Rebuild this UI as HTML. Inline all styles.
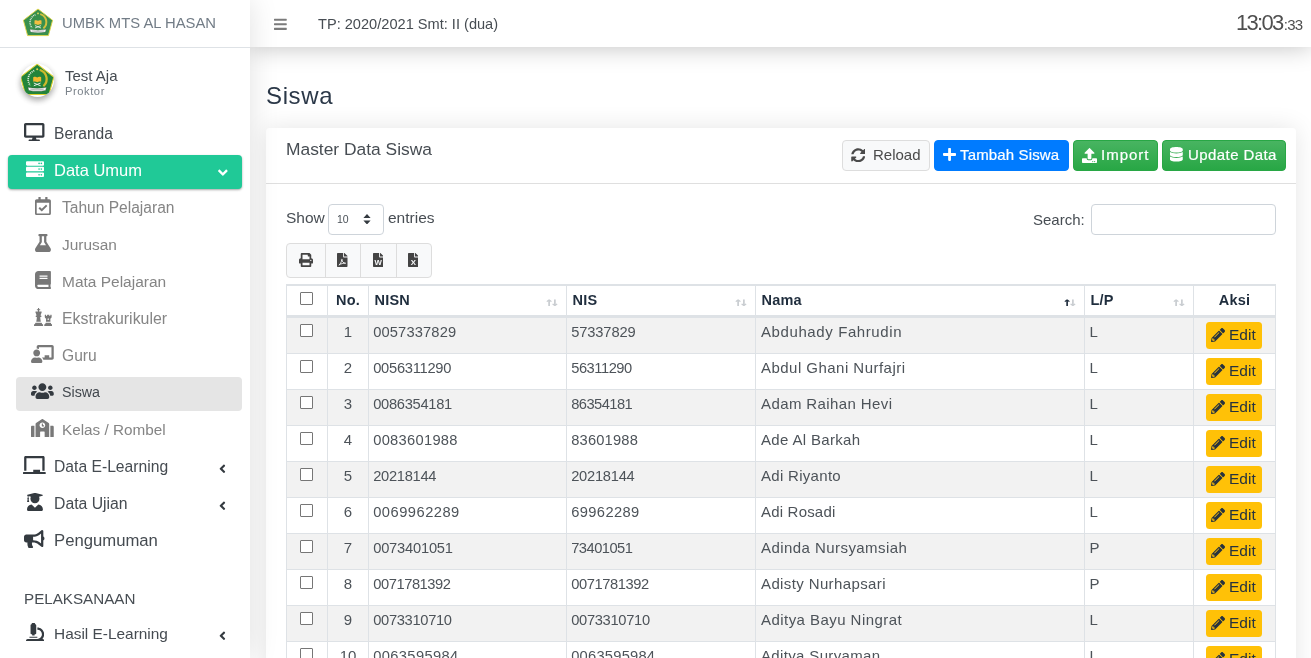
<!DOCTYPE html>
<html lang="id">
<head>
<meta charset="utf-8">
<title>Siswa | UMBK MTS AL HASAN</title>
<style>
*{box-sizing:border-box}
html,body{margin:0;padding:0}
body{width:1311px;height:658px;overflow:hidden;background:#fff;font-family:"Liberation Sans",sans-serif;font-size:16px;color:#212529;position:relative}
svg{display:block}
a{text-decoration:none;color:inherit}
.tx,.txt,.nm,.rl,.nh,.tp,.clk,h1,.ttl,.btn span,.lbl,.sel span,table,.ed span{will-change:transform}
.sidebar{position:absolute;left:0;top:0;width:250px;height:658px;background:#fff;box-shadow:0 0 28px rgba(0,0,0,.12);z-index:5}
.brand{position:absolute;left:0;top:0;width:250px;height:48px;border-bottom:1px solid #dee2e6}
.brand .logo{position:absolute;left:21.5px;top:8px;opacity:.9}
.brand .txt{position:absolute;left:62px;top:11px;font-size:14.8px;line-height:24px;color:#727c86;white-space:nowrap}
.user .av{position:absolute;left:21px;top:64px;width:33px;height:33px;border-radius:50%;background:#fff;box-shadow:0 3px 6px rgba(0,0,0,.16),0 3px 6px rgba(0,0,0,.23);overflow:hidden}
.user .av svg{position:absolute;left:-1.7px;top:-1.2px}
.user .nm{position:absolute;left:65px;top:65px;font-size:15px;line-height:22px;color:#454b51;white-space:nowrap}
.user .rl{position:absolute;left:65px;top:84px;font-size:11.2px;letter-spacing:.55px;line-height:14px;color:#7a828a;white-space:nowrap}
.nav{position:absolute;left:0;top:0;width:250px;margin:0;padding:0;list-style:none}
.ni{position:absolute;left:8px;width:234px;height:34px;border-radius:4px;color:#454b51;font-size:15.6px;line-height:33px;white-space:nowrap}
.ni.sub{left:16px;width:226px;color:#858585}
.ni .ic{position:absolute;left:0;top:0;width:100%;height:100%;color:#343a40}
.ni.sub .ic{color:#787878}
.ni.cur .ic{color:#343a40}
.ni.open .ic{color:#fff}
.ni .ic svg{position:absolute}
.ni .tx{position:absolute;left:46.2px;top:-.700px}
.ni.sub .tx{left:45.8px}
.ni.open{background:#20c997;color:#fff;box-shadow:0 1px 3px rgba(0,0,0,.12),0 1px 2px rgba(0,0,0,.24)}
.ni.cur{background:#e5e5e5;color:#41474d}
.nh{position:absolute;left:24px;top:588px;font-size:15.2px;line-height:22px;color:#474d53;white-space:nowrap}
.topbar{position:absolute;left:250px;top:0;width:1061px;height:47px;background:#fff;box-shadow:0 0 25px rgba(0,0,0,.25);z-index:3}
.topbar .bars{position:absolute;left:24px;top:16.5px;color:#7b7b7b}
.topbar .tp{position:absolute;left:68px;top:12px;font-size:14.6px;line-height:24px;color:#474d53;white-space:nowrap}
.topbar .clk{position:absolute;right:8.5px;top:6.5px;white-space:nowrap;color:#4f4f4f;line-height:32px}
.topbar .clk b{font-weight:400;font-size:22px;letter-spacing:-1.7px;margin-right:1.2px}
.topbar .clk i{font-style:normal;font-size:15px;letter-spacing:-.750px}
h1{position:absolute;left:266px;top:80.5px;margin:0;font-size:24px;letter-spacing:.62px;line-height:30px;font-weight:400;color:#2b3848;white-space:nowrap}
.card{position:absolute;left:266px;top:128px;width:1030px;height:560px;background:#fff;border-radius:4px;box-shadow:0 0 24px rgba(0,0,0,.105)}
.card .hd{position:absolute;left:0;top:0;width:1030px;height:56px;border-bottom:1px solid #dfdfdf}
.card .ttl{position:absolute;left:20px;top:8.4px;font-size:17.4px;line-height:26px;color:#474d53;white-space:nowrap}
.btn{position:absolute;top:12px;height:31px;border-radius:4px;font-size:15px;line-height:29px;white-space:nowrap;border:1px solid transparent}
.btn svg{position:absolute}
.btn span{position:absolute;top:-1px}
.b-pri span,.b-suc span{-webkit-text-stroke:.2px #fff}
.b-def{left:576px;width:88px;background:#f8f9fa;border-color:#ddd;color:#4a4a4a}
.b-pri{left:668px;width:135px;background:#007bff;border-color:#007bff;color:#fff}
.b-suc{background:#28a745 linear-gradient(180deg,#48b461,#28a745);border-color:#28a745;color:#fff}
.b-imp{left:807px;width:85px}
.b-upd{left:896px;width:124px}
.lbl{position:absolute;font-size:15.5px;line-height:22px;color:#474d53;white-space:nowrap}
.sel{position:absolute;left:62px;top:76px;width:56px;height:31px;border:1px solid #ced4da;border-radius:4px;background:#fff;font-size:10.5px;line-height:29px;color:#495057}
.sel span{position:absolute;left:8px;top:0}
.sel svg{position:absolute;left:34px;top:8.7px}
.srch{position:absolute;left:825px;top:76px;width:185px;height:31px;border:1px solid #ced4da;border-radius:4px;background:#fff}
.bg{position:absolute;left:20px;top:115px;width:146px;height:34.5px;border:1px solid #ddd;border-radius:4px;background:#f8f9fa;color:#444}
.bg i{position:absolute;top:0;width:1px;height:100%;background:#ddd}
.bg svg{position:absolute;top:8.7px}
table{position:absolute;left:20px;top:156px;width:990px;border-collapse:separate;border-spacing:0;table-layout:fixed;font-size:15px;color:#4d5359}
th,td{border-right:1px solid #dee2e6;border-bottom:1px solid #dee2e6;padding:3px 5px 0 5.5px;vertical-align:top;text-align:left;white-space:nowrap;overflow:hidden;position:relative}
th:first-child,td:first-child{border-left:1px solid #dee2e6}
th{height:34px;border-top:2px solid #dee2e6;border-bottom:3px solid #dee2e6;font-size:14.5px;font-weight:700;color:#1f2d3d;line-height:22px;padding-top:2.5px;letter-spacing:.2px}
td{height:36px;line-height:22px}
td.d{font-size:14.7px;padding-left:4.2px}
td.n{letter-spacing:.42px;padding-left:5px}
td.l{padding-left:4.5px}
tr.o td{background:#f2f2f2}
.c{text-align:center;padding-left:0;padding-right:0}
.cb{display:block;width:13px;height:13px;border:1px solid #767676;border-radius:1px;background:#fff;margin:3px 0 0 13px}
th .cb{margin-top:3.5px}
.so{position:absolute;right:10px;top:6.5px;font-size:12px;line-height:18px;font-weight:700;color:#c9cdd1;letter-spacing:-2.7px;transform:scaleX(1.28);transform-origin:100% 50%;font-family:"DejaVu Sans Mono","DejaVu Sans","Liberation Sans",sans-serif}
.so b{font-weight:700;color:#1f2d3d}
.ed{display:block;position:relative;margin:1px 0 0 12px;width:56px;height:27px;border-radius:3.5px;background:#ffc107;color:#27333f;font-size:15.5px;line-height:27px;text-align:left}
.ed svg{position:absolute;left:5px;top:6px}
.ed span{position:absolute;left:22.8px;top:-1px}
</style>
</head>
<body>
<div class="topbar">
  <div class="bars"><svg width="12.78" height="14.6" viewBox="0 0 448 512" ><path fill="currentColor" d="M16 132h416c8.837 0 16-7.163 16-16V76c0-8.837-7.163-16-16-16H16C7.163 60 0 67.163 0 76v40c0 8.837 7.163 16 16 16zm0 160h416c8.837 0 16-7.163 16-16v-40c0-8.837-7.163-16-16-16H16c-8.837 0-16 7.163-16 16v40c0 8.837 7.163 16 16 16zm0 160h416c8.837 0 16-7.163 16-16v-40c0-8.837-7.163-16-16-16H16c-8.837 0-16 7.163-16 16v40c0 8.837 7.163 16 16 16z"/></svg></div>
  <div class="tp">TP: 2020/2021 Smt: II (dua)</div>
  <div class="clk"><b>13:03</b><i>:33</i></div>
</div>
<aside class="sidebar">
  <div class="brand"><div class="logo"><svg width="32" height="29" viewBox="0 0 32 29" >
<polygon points="16,1 30.6,12.3 26.4,27.6 5.6,27.6 1.4,12.3" fill="#23843a" stroke="#dfd031" stroke-width=".9" stroke-linejoin="round"/>
<path d="M19 6.400a8.200 8.200 0 0 1 3 13.400" fill="none" stroke="#cdb92c" stroke-width="2" stroke-linecap="round"/>
<path d="M13.400 6.700a8.200 8.200 0 0 0-3.400 13" fill="none" stroke="#e4ecdf" stroke-width="1.500" stroke-dasharray=".9 .8"/>
<circle cx="16" cy="5.400" r=".9" fill="#e9d84a"/>
<path d="M12.500 12.500c1.200-.5 2.400-.5 3.500 .2 1.100-.7 2.300-.7 3.500-.2v4c-1.200-.4-2.400-.3-3.500 .4-1.100-.7-2.300-.8-3.500-.4z" fill="#f2b92e"/>
<path d="M13 20l6-2.400M19 20l-6-2.400" stroke="#f2f2f2" stroke-width=".8"/>
<path d="M7.800 21.300c5.400 1.100 11 1.100 16.400 0l-.8 2.800c-4.900 1-9.900 1-14.800 0z" fill="#f7f7f7" stroke="#2c3a2c" stroke-width=".3"/>
<path d="M10.200 23c3.800 .6 7.800 .6 11.600 0" fill="none" stroke="#333" stroke-width=".55" stroke-dasharray=".5 .4"/>
</svg></div><div class="txt">UMBK MTS AL HASAN</div></div>
  <div class="user"><div class="av"><svg width="36.4" height="33" viewBox="0 0 32 29" >
<polygon points="16,1 30.6,12.3 26.4,27.6 5.6,27.6 1.4,12.3" fill="#23843a" stroke="#dfd031" stroke-width=".9" stroke-linejoin="round"/>
<path d="M19 6.400a8.200 8.200 0 0 1 3 13.400" fill="none" stroke="#cdb92c" stroke-width="2" stroke-linecap="round"/>
<path d="M13.400 6.700a8.200 8.200 0 0 0-3.400 13" fill="none" stroke="#e4ecdf" stroke-width="1.500" stroke-dasharray=".9 .8"/>
<circle cx="16" cy="5.400" r=".9" fill="#e9d84a"/>
<path d="M12.500 12.500c1.200-.5 2.400-.5 3.500 .2 1.100-.7 2.300-.7 3.500-.2v4c-1.200-.4-2.400-.3-3.500 .4-1.100-.7-2.300-.8-3.500-.4z" fill="#f2b92e"/>
<path d="M13 20l6-2.400M19 20l-6-2.400" stroke="#f2f2f2" stroke-width=".8"/>
<path d="M7.800 21.300c5.400 1.100 11 1.100 16.400 0l-.8 2.800c-4.900 1-9.900 1-14.800 0z" fill="#f7f7f7" stroke="#2c3a2c" stroke-width=".3"/>
<path d="M10.200 23c3.800 .6 7.800 .6 11.600 0" fill="none" stroke="#333" stroke-width=".55" stroke-dasharray=".5 .4"/>
</svg></div><div class="nm">Test Aja</div><div class="rl">Proktor</div></div>
  <ul class="nav">
    <li class="ni " style="top:118px"><span class="ic"><svg width="20.47" height="18.2" viewBox="0 0 576 512" style="left:16.4px;top:5.3px"><path fill="currentColor" d="M528 0H48C21.5 0 0 21.5 0 48v320c0 26.5 21.5 48 48 48h192l-16 48h-72c-13.3 0-24 10.7-24 24s10.7 24 24 24h272c13.3 0 24-10.700 24-24s-10.700-24-24-24h-72l-16-48h192c26.500 0 48-21.500 48-48V48c0-26.500-21.500-48-48-48zm-16 352H64V64h448v288z"/></svg></span><span class="tx" style="font-size:15.6px">Beranda</span></li>
    <li class="ni open" style="top:155px"><span class="ic"><svg width="18.20" height="18.2" viewBox="0 0 512 512" style="left:17.5px;top:5.3px"><path fill="currentColor" d="M480 160H32c-17.673 0-32-14.327-32-32V64c0-17.673 14.327-32 32-32h448c17.673 0 32 14.327 32 32v64c0 17.673-14.327 32-32 32zm-48-88c-13.255 0-24 10.745-24 24s10.745 24 24 24 24-10.745 24-24-10.745-24-24-24zm-64 0c-13.255 0-24 10.745-24 24s10.745 24 24 24 24-10.745 24-24-10.745-24-24-24zm112 248H32c-17.673 0-32-14.327-32-32v-64c0-17.673 14.327-32 32-32h448c17.673 0 32 14.327 32 32v64c0 17.673-14.327 32-32 32zm-48-88c-13.255 0-24 10.745-24 24s10.745 24 24 24 24-10.745 24-24-10.745-24-24-24zm-64 0c-13.255 0-24 10.745-24 24s10.745 24 24 24 24-10.745 24-24-10.745-24-24-24zm112 248H32c-17.673 0-32-14.327-32-32v-64c0-17.673 14.327-32 32-32h448c17.673 0 32 14.327 32 32v64c0 17.673-14.327 32-32 32zm-48-88c-13.255 0-24 10.745-24 24s10.745 24 24 24 24-10.745 24-24-10.745-24-24-24zm-64 0c-13.255 0-24 10.745-24 24s10.745 24 24 24 24-10.745 24-24-10.745-24-24-24z"/></svg><svg width="7.70" height="15.4" viewBox="0 0 256 512" style="left:211.2px;top:10.4px;transform:rotate(-90deg)"><path fill="currentColor" d="M31.7 239l136-136c9.4-9.4 24.6-9.4 33.9 0l22.600 22.600c9.400 9.400 9.400 24.600 0 33.900L127.900 256l96.400 96.400c9.400 9.400 9.400 24.600 0 33.900L201.700 409c-9.400 9.400-24.600 9.400-33.900 0l-136-136c-9.500-9.400-9.500-24.600-.1-34z"/></svg></span><span class="tx" style="font-size:16.5px">Data Umum</span></li>
    <li class="ni sub" style="top:192px"><span class="ic"><svg width="15.92" height="18.2" viewBox="0 0 448 512" style="left:18.7px;top:5.3px"><path fill="currentColor" d="M400 64h-48V12c0-6.627-5.373-12-12-12h-40c-6.627 0-12 5.373-12 12v52H160V12c0-6.627-5.373-12-12-12h-40c-6.627 0-12 5.373-12 12v52H48C21.490 64 0 85.490 0 112v352c0 26.510 21.490 48 48 48h352c26.510 0 48-21.490 48-48V112c0-26.510-21.490-48-48-48zm-6 400H54a6 6 0 0 1-6-6V160h352v298a6 6 0 0 1-6 6zm-52.849-200.650L198.842 404.519c-4.705 4.667-12.303 4.637-16.971-.068l-75.091-75.699c-4.667-4.705-4.637-12.303.068-16.971l22.719-22.536c4.705-4.667 12.303-4.637 16.970.069l44.104 44.461 111.072-110.181c4.705-4.667 12.303-4.637 16.971.068l22.536 22.718c4.667 4.705 4.636 12.303-.069 16.970z"/></svg></span><span class="tx" style="font-size:15.57px">Tahun Pelajaran</span></li>
    <li class="ni sub" style="top:229px"><span class="ic"><svg width="15.92" height="18.2" viewBox="0 0 448 512" style="left:18.7px;top:5.3px"><path fill="currentColor" d="M437.2 403.5L320 215V64h8c13.3 0 24-10.7 24-24V24c0-13.3-10.7-24-24-24H120c-13.3 0-24 10.7-24 24v16c0 13.3 10.7 24 24 24h8v151L10.8 403.5C-18.5 450.6 15.3 512 70.9 512h306.2c55.7 0 89.4-61.5 60.1-108.500zM137.900 320l48.200-77.600c3.700-5.200 5.800-11.600 5.800-18.400V64h64v160c0 6.900 2.200 13.200 5.800 18.400l48.200 77.600h-172z"/></svg></span><span class="tx" style="font-size:15.44px">Jurusan</span></li>
    <li class="ni sub" style="top:266px"><span class="ic"><svg width="15.92" height="18.2" viewBox="0 0 448 512" style="left:18.7px;top:5.3px"><path fill="currentColor" d="M448 360V24c0-13.3-10.7-24-24-24H96C43 0 0 43 0 96v320c0 53 43 96 96 96h328c13.3 0 24-10.7 24-24v-16c0-7.5-3.500-14.300-8.900-18.700-4.200-15.400-4.200-59.300 0-74.700 5.400-4.300 8.900-11.100 8.900-18.600zM128 134c0-3.300 2.700-6 6-6h212c3.300 0 6 2.700 6 6v20c0 3.300-2.700 6-6 6H134c-3.300 0-6-2.700-6-6v-20zm0 64c0-3.300 2.700-6 6-6h212c3.300 0 6 2.700 6 6v20c0 3.300-2.700 6-6 6H134c-3.300 0-6-2.700-6-6v-20zm253.400 250H96c-17.700 0-32-14.300-32-32 0-17.600 14.400-32 32-32h285.400c-1.900 17.100-1.900 46.900 0 64z"/></svg></span><span class="tx" style="font-size:15.49px">Mata Pelajaran</span></li>
    <li class="ni sub" style="top:303px"><span class="ic"><svg width="18.20" height="18.2" viewBox="0 0 512 512" style="left:17.6px;top:5.3px"><path fill="currentColor" d="M74 208H64a16 16 0 0 0-16 16v16a16 16 0 0 0 16 16h15.940A535.780 535.780 0 0 1 64 384h128a535.780 535.780 0 0 1-15.940-128H192a16 16 0 0 0 16-16v-16a16 16 0 0 0-16-16h-10l33.890-90.380a16 16 0 0 0-15-21.620H144V64h24a8 8 0 0 0 8-8V40a8 8 0 0 0-8-8h-24V8a8 8 0 0 0-8-8h-16a8 8 0 0 0-8 8v24H88a8 8 0 0 0-8 8v16a8 8 0 0 0 8 8h24v32H55.090a16 16 0 0 0-15 21.620zm173.160 251.580L224 448v-16a16 16 0 0 0-16-16H48a16 16 0 0 0-16 16v16L8.850 459.580A16 16 0 0 0 0 473.890V496a16 16 0 0 0 16 16h224a16 16 0 0 0 16-16v-22.110a16 16 0 0 0-8.840-14.310zm92.770-157.780l-3.290 82.200h126.720l-3.290-82.210 24.600-20.790A32 32 0 0 0 496 256.540V198a6 6 0 0 0-6-6h-26.380a6 6 0 0 0-6 6v26h-24.710v-26a6 6 0 0 0-6-6H373.100a6 6 0 0 0-6 6v26h-24.710v-26a6 6 0 0 0-6-6H310a6 6 0 0 0-6 6v58.600a32 32 0 0 0 11.360 24.400zM384 304a16 16 0 0 1 32 0v32h-32zm119.160 155.580L480 448v-16a16 16 0 0 0-16-16H336a16 16 0 0 0-16 16v16l-23.150 11.580a16 16 0 0 0-8.850 14.310V496a16 16 0 0 0 16 16h192a16 16 0 0 0 16-16v-22.110a16 16 0 0 0-8.840-14.310z"/></svg></span><span class="tx" style="font-size:15.9px">Ekstrakurikuler</span></li>
    <li class="ni sub" style="top:340px"><span class="ic"><svg width="22.75" height="18.2" viewBox="0 0 640 512" style="left:15.3px;top:5.3px"><path fill="currentColor" d="M208 352c-2.390 0-4.780.35-7.060 1.090C187.980 357.300 174.350 360 160 360c-14.350 0-27.980-2.700-40.950-6.910-2.280-.74-4.660-1.090-7.050-1.090C49.940 352-.33 402.480 0 464.620.14 490.880 21.730 512 48 512h224c26.270 0 47.860-21.120 48-47.380.33-62.140-49.940-112.620-112-112.620zm-48-32c53.020 0 96-42.980 96-96s-42.980-96-96-96-96 42.980-96 96 42.980 96 96 96zM592 0H208c-26.470 0-48 22.250-48 49.590V96c23.420 0 45.100 6.780 64 17.800V64h352v288h-64v-64H384v64h-76.240c19.100 16.690 33.120 38.730 39.690 64H592c26.470 0 48-22.250 48-49.590V49.590C640 22.250 618.470 0 592 0z"/></svg></span><span class="tx" style="font-size:15.6px">Guru</span></li>
    <li class="ni sub cur" style="top:377px"><span class="ic"><svg width="22.75" height="18.2" viewBox="0 0 640 512" style="left:15.3px;top:5.3px"><path fill="currentColor" d="M96 224c35.3 0 64-28.7 64-64s-28.7-64-64-64-64 28.7-64 64 28.7 64 64 64zm448 0c35.3 0 64-28.7 64-64s-28.7-64-64-64-64 28.7-64 64 28.7 64 64 64zm32 32h-64c-17.600 0-33.500 7.100-45.100 18.600 40.300 22.100 68.900 62 75.100 109.400h66c17.700 0 32-14.300 32-32v-32c0-35.300-28.700-64-64-64zm-256 0c61.900 0 112-50.100 112-112S381.900 32 320 32 208 82.100 208 144s50.100 112 112 112zm76.800 32h-8.300c-20.800 10-43.900 16-68.500 16s-47.600-6-68.500-16h-8.300C179.600 288 128 339.600 128 403.200V432c0 26.500 21.500 48 48 48h288c26.500 0 48-21.500 48-48v-28.800c0-63.600-51.600-115.200-115.200-115.200zm-223.700-13.400C161.500 263.100 145.600 256 128 256H64c-35.300 0-64 28.700-64 64v32c0 17.700 14.300 32 32 32h65.900c6.300-47.400 34.900-87.300 75.200-109.400z"/></svg></span><span class="tx" style="font-size:14.25px">Siswa</span></li>
    <li class="ni sub" style="top:414px"><span class="ic"><svg width="22.75" height="18.2" viewBox="0 0 640 512" style="left:15.3px;top:5.3px"><path fill="currentColor" d="M0 224v272c0 8.840 7.160 16 16 16h80V192H32c-17.670 0-32 14.330-32 32zm360-48h-24v-40c0-4.420-3.580-8-8-8h-16c-4.420 0-8 3.580-8 8v64c0 4.420 3.580 8 8 8h48c4.420 0 8-3.580 8-8v-16c0-4.420-3.580-8-8-8zm137.750-63.960l-160-106.670a32.020 32.020 0 0 0-35.500 0l-160 106.670A32.002 32.002 0 0 0 128 138.660V512h128V368c0-8.840 7.160-16 16-16h96c8.840 0 16 7.160 16 16v144h128V138.670c0-10.700-5.350-20.700-14.250-26.630zM320 256c-44.180 0-80-35.820-80-80s35.820-80 80-80 80 35.820 80 80-35.820 80-80 80zm288-64h-64v320h80c8.840 0 16-7.160 16-16V224c0-17.670-14.330-32-32-32z"/></svg></span><span class="tx" style="font-size:15.29px">Kelas / Rombel</span></li>
    <li class="ni " style="top:451px"><span class="ic"><svg width="22.75" height="18.2" viewBox="0 0 640 512" style="left:15.2px;top:5.3px"><path fill="currentColor" d="M96 64h448v352h64V40c0-22.060-17.940-40-40-40H72C49.940 0 32 17.940 32 40v376h64V64zm528 384H480v-64H288v64H16c-8.840 0-16 7.160-16 16v32c0 8.840 7.160 16 16 16h608c8.840 0 16-7.160 16-16v-32c0-8.840-7.160-16-16-16z"/></svg><svg width="6.80" height="13.6" viewBox="0 0 256 512" style="left:211.2px;top:11px"><path fill="currentColor" d="M31.7 239l136-136c9.4-9.4 24.6-9.4 33.9 0l22.600 22.600c9.400 9.400 9.400 24.600 0 33.900L127.900 256l96.400 96.400c9.400 9.400 9.400 24.600 0 33.900L201.700 409c-9.400 9.400-24.600 9.400-33.900 0l-136-136c-9.500-9.400-9.500-24.600-.1-34z"/></svg></span><span class="tx" style="font-size:15.68px">Data E-Learning</span></li>
    <li class="ni " style="top:488px"><span class="ic"><svg width="15.92" height="18.2" viewBox="0 0 448 512" style="left:18.6px;top:5.3px"><path fill="currentColor" d="M319.4 320.6L224 416l-95.400-95.400C57.100 323.700 0 382.200 0 454.400v9.600c0 26.500 21.500 48 48 48h352c26.500 0 48-21.500 48-48v-9.600c0-72.200-57.100-130.700-128.600-133.800zM13.600 79.800l6.400 1.500v58.400c-7 4.200-12 11.500-12 20.300 0 8.400 4.600 15.400 11.100 19.700L3.500 242c-1.700 6.900 2.100 14 7.600 14h41.800c5.500 0 9.300-7.100 7.600-14l-15.600-62.300C51.400 175.400 56 168.400 56 160c0-8.800-5-16.100-12-20.300V87.100l66 15.900c-8.600 17.200-14 36.400-14 57 0 70.700 57.300 128 128 128s128-57.300 128-128c0-20.600-5.300-39.800-14-57l96.300-23.200c18.200-4.400 18.200-27.100 0-31.500l-190.400-46c-13-3.100-26.700-3.100-39.700 0L13.600 48.200c-18.100 4.400-18.100 27.200 0 31.600z"/></svg><svg width="6.80" height="13.6" viewBox="0 0 256 512" style="left:211.2px;top:11px"><path fill="currentColor" d="M31.7 239l136-136c9.4-9.4 24.6-9.4 33.9 0l22.600 22.600c9.400 9.400 9.400 24.600 0 33.900L127.900 256l96.400 96.400c9.400 9.400 9.400 24.600 0 33.900L201.700 409c-9.400 9.400-24.600 9.400-33.900 0l-136-136c-9.500-9.400-9.500-24.600-.1-34z"/></svg></span><span class="tx" style="font-size:15.78px">Data Ujian</span></li>
    <li class="ni " style="top:525px"><span class="ic"><svg width="20.47" height="18.2" viewBox="0 0 576 512" style="left:16.4px;top:5.3px"><path fill="currentColor" d="M576 240c0-23.630-12.950-44.040-32-55.120V32.010C544 23.260 537.020 0 512 0c-7.120 0-14.190 2.380-19.980 7.020l-85.030 68.030C364.280 109.190 310.660 128 256 128H64c-35.350 0-64 28.650-64 64v96c0 35.350 28.650 64 64 64h33.700c-1.390 10.480-2.180 21.140-2.180 32 0 39.770 9.260 77.350 25.560 110.940 5.190 10.690 16.520 17.060 28.400 17.060h74.280c26.050 0 41.690-29.840 25.900-50.560-16.400-21.520-26.150-48.360-26.150-77.440 0-11.110 1.620-21.790 4.410-32H256c54.660 0 108.280 18.810 150.980 52.950l85.030 68.030a32.023 32.023 0 0 0 19.980 7.020c24.920 0 32-22.780 32-32V295.130C563.050 284.040 576 263.630 576 240zm-96 141.420l-33.050-26.440C392.950 311.780 325.120 288 256 288v-96c69.120 0 136.950-23.780 190.950-66.980L480 98.580v282.840z"/></svg></span><span class="tx" style="font-size:16.7px">Pengumuman</span></li>
    <li class="ni " style="top:618px"><span class="ic"><svg width="18.20" height="18.2" viewBox="0 0 512 512" style="left:17.5px;top:5.3px"><path fill="currentColor" d="M160 320h12v16c0 8.840 7.160 16 16 16h40c8.840 0 16-7.160 16-16v-16h12c17.670 0 32-14.330 32-32V64c0-17.670-14.330-32-32-32V16c0-8.840-7.160-16-16-16h-64c-8.840 0-16 7.160-16 16v16c-17.670 0-32 14.330-32 32v224c0 17.670 14.330 32 32 32zm304 128h-1.290C493.240 413.990 512 369.200 512 320c0-105.880-86.120-192-192-192v64c70.580 0 128 57.420 128 128s-57.420 128-128 128H48c-26.510 0-48 21.490-48 48 0 8.840 7.160 16 16 16h480c8.840 0 16-7.160 16-16 0-26.510-21.490-48-48-48zm-360-32h208c4.420 0 8-3.580 8-8v-16c0-4.420-3.580-8-8-8H104c-4.420 0-8 3.580-8 8v16c0 4.420 3.580 8 8 8z"/></svg><svg width="6.80" height="13.6" viewBox="0 0 256 512" style="left:211.2px;top:11px"><path fill="currentColor" d="M31.7 239l136-136c9.4-9.4 24.6-9.4 33.9 0l22.600 22.600c9.400 9.400 9.400 24.600 0 33.900L127.900 256l96.400 96.400c9.400 9.400 9.400 24.600 0 33.900L201.700 409c-9.400 9.400-24.600 9.400-33.900 0l-136-136c-9.500-9.400-9.500-24.600-.1-34z"/></svg></span><span class="tx" style="font-size:15.41px">Hasil E-Learning</span></li>
  </ul>
  <div class="nh">PELAKSANAAN</div>
</aside>
<h1>Siswa</h1>
<section class="card">
  <div class="hd">
    <div class="ttl">Master Data Siswa</div>
    <a class="btn b-def"><svg width="14.50" height="14.5" viewBox="0 0 512 512" style="left:7.7px;top:6.8px"><path fill="currentColor" d="M370.72 133.28C339.458 104.008 298.888 87.962 255.848 88c-77.458.068-144.328 53.178-162.791 126.850-1.344 5.363-6.122 9.150-11.651 9.150H24.103c-7.498 0-13.194-6.807-11.807-14.176C33.933 94.924 134.813 8 256 8c66.448 0 126.791 26.136 171.315 68.685L463.030 40.970C478.149 25.851 504 36.559 504 57.941V192c0 13.255-10.745 24-24 24H345.941c-21.382 0-32.090-25.851-16.971-40.971l41.750-41.749zM32 296h134.059c21.382 0 32.090 25.851 16.971 40.971l-41.750 41.750c31.262 29.273 71.835 45.319 114.876 45.280 77.418-.070 144.315-53.144 162.787-126.849 1.344-5.363 6.122-9.150 11.651-9.150h57.304c7.498 0 13.194 6.807 11.807 14.176C478.067 417.076 377.187 504 256 504c-66.448 0-126.791-26.136-171.315-68.685L48.970 471.030C33.851 486.149 8 475.441 8 454.059V320c0-13.255 10.745-24 24-24z"/></svg><span style="left:30px">Reload</span></a>
    <a class="btn b-pri"><svg width="13.12" height="15" viewBox="0 0 448 512" style="left:7.6px;top:6.3px"><path fill="currentColor" d="M416 208H272V64c0-17.67-14.33-32-32-32h-32c-17.67 0-32 14.33-32 32v144H32c-17.67 0-32 14.33-32 32v32c0 17.67 14.33 32 32 32h144v144c0 17.67 14.33 32 32 32h32c17.67 0 32-14.33 32-32V304h144c17.67 0 32-14.33 32-32v-32c0-17.67-14.33-32-32-32z"/></svg><span style="left:25.2px;letter-spacing:.15px">Tambah Siswa</span></a>
    <a class="btn b-suc b-imp"><svg width="15.00" height="15" viewBox="0 0 512 512" style="left:8px;top:7px"><path fill="currentColor" d="M296 384h-80c-13.3 0-24-10.7-24-24V192h-87.700c-17.800 0-26.700-21.500-14.100-34.100L242.300 5.700c7.500-7.500 19.800-7.500 27.300 0l152.200 152.200c12.600 12.600 3.700 34.100-14.100 34.100H320v168c0 13.300-10.700 24-24 24zm216-8v112c0 13.300-10.700 24-24 24H24c-13.300 0-24-10.700-24-24V376c0-13.300 10.700-24 24-24h136v8c0 30.900 25.100 56 56 56h80c30.900 0 56-25.100 56-56v-8h136c13.300 0 24 10.700 24 24zm-124 88c0-11-9-20-20-20s-20 9-20 20 9 20 20 20 20-9 20-20zm64 0c0-11-9-20-20-20s-20 9-20 20 9 20 20 20 20-9 20-20z"/></svg><span style="left:26.5px;letter-spacing:1px">Import</span></a>
    <a class="btn b-suc b-upd"><svg width="12.78" height="14.6" viewBox="0 0 448 512" style="left:7px;top:6.3px"><path fill="currentColor" d="M448 73.143v45.714C448 159.143 347.667 192 224 192S0 159.143 0 118.857V73.143C0 32.857 100.333 0 224 0s224 32.857 224 73.143zM448 176v102.857C448 319.143 347.667 352 224 352S0 319.143 0 278.857V176c48.125 33.143 136.208 48.572 224 48.572S399.874 209.143 448 176zm0 160v102.857C448 479.143 347.667 512 224 512S0 479.143 0 438.857V336c48.125 33.143 136.208 48.572 224 48.572S399.874 369.143 448 336z"/></svg><span style="left:24.5px;letter-spacing:.42px">Update Data</span></a>
  </div>
  <div class="lbl" style="left:20px;top:79px">Show</div>
  <div class="sel"><span>10</span><svg width="8" height="10.5" viewBox="0 0 8 11" preserveAspectRatio="none"><path fill="#343a40" d="M4 0L7.600 4.300H.4zM4 11L.4 6.700h7.200z"/></svg></div>
  <div class="lbl" style="left:122px;top:79px">entries</div>
  <div class="lbl" style="left:767px;top:81px;font-size:15px">Search:</div>
  <div class="srch"></div>
  <div class="bg">
    <span style="position:absolute;left:11.5px;top:0"><svg width="14.00" height="14" viewBox="0 0 512 512" ><path fill="currentColor" d="M448 192V77.250c0-8.490-3.370-16.620-9.370-22.630L393.370 9.370c-6-6-14.140-9.370-22.630-9.370H96C78.330 0 64 14.330 64 32v160c-35.350 0-64 28.650-64 64v112c0 8.840 7.160 16 16 16h48v96c0 17.670 14.330 32 32 32h320c17.670 0 32-14.330 32-32v-96h48c8.840 0 16-7.160 16-16V256c0-35.350-28.650-64-64-64zm-64 256H128v-96h256v96zm0-224H128V64h192v48c0 8.840 7.160 16 16 16h48v96zm48 72c-13.250 0-24-10.750-24-24 0-13.260 10.750-24 24-24s24 10.740 24 24c0 13.250-10.750 24-24 24z"/></svg></span>
    <i style="left:37.5px"></i>
    <span style="position:absolute;left:50.4px;top:0"><svg width="10.50" height="14" viewBox="0 0 384 512"><path fill="currentColor" d="M224 136V0H24C10.7 0 0 10.7 0 24v464c0 13.3 10.7 24 24 24h336c13.3 0 24-10.7 24-24V160H248c-13.2 0-24-10.800-24-24zm160-14.100v6.100H256V0h6.100c6.400 0 12.500 2.500 17 7l97.900 98c4.500 4.500 7 10.600 7 16.900z"/><path fill="none" stroke="#f8f9fa" stroke-width="32" stroke-linecap="round" stroke-linejoin="round" d="M176 262c-14 70-60 150-98 176 M178 262c6 60 60 104 124 112 M86 430c60-40 150-62 214-58"/><circle cx="178" cy="248" r="20" fill="none" stroke="#f8f9fa" stroke-width="20"/></svg></span>
    <i style="left:72.5px"></i>
    <span style="position:absolute;left:85.9px;top:0"><svg width="10.50" height="14" viewBox="0 0 384 512"><path fill="currentColor" d="M224 136V0H24C10.7 0 0 10.7 0 24v464c0 13.3 10.7 24 24 24h336c13.3 0 24-10.7 24-24V160H248c-13.2 0-24-10.800-24-24zm160-14.100v6.100H256V0h6.100c6.400 0 12.500 2.500 17 7l97.900 98c4.500 4.500 7 10.600 7 16.900z"/><text x="192" y="445" text-anchor="middle" font-family="Liberation Sans, sans-serif" font-weight="700" font-size="285" fill="#f8f9fa">W</text></svg></span>
    <i style="left:108.5px"></i>
    <span style="position:absolute;left:120.9px;top:0"><svg width="10.50" height="14" viewBox="0 0 384 512"><path fill="currentColor" d="M224 136V0H24C10.7 0 0 10.7 0 24v464c0 13.3 10.7 24 24 24h336c13.3 0 24-10.7 24-24V160H248c-13.2 0-24-10.800-24-24zm160-14.100v6.100H256V0h6.100c6.400 0 12.500 2.500 17 7l97.900 98c4.500 4.500 7 10.600 7 16.900z"/><text x="192" y="445" text-anchor="middle" font-family="Liberation Sans, sans-serif" font-weight="700" font-size="285" fill="#f8f9fa">X</text></svg></span>
  </div>
  <table>
    <colgroup><col style="width:42px"><col style="width:41px"><col style="width:198px"><col style="width:189px"><col style="width:329px"><col style="width:109px"><col style="width:82px"></colgroup>
    <thead>
      <tr><th class="c"><span class="cb"></span></th><th class="c">No.</th><th>NISN<span class="so">↑↓</span></th><th>NIS<span class="so">↑↓</span></th><th>Nama<span class="so"><b>↑</b>↓</span></th><th>L/P<span class="so">↑↓</span></th><th class="c">Aksi</th></tr>
    </thead>
    <tbody>
      <tr class="o"><td class="c"><span class="cb"></span></td><td class="c">1</td><td class="d" style="letter-spacing:0.14px">0057337829</td><td class="d" style="letter-spacing:-0.13px">57337829</td><td class="n" style="letter-spacing:0.6px">Abduhady Fahrudin</td><td class="l">L</td><td class="c"><a class="ed"><svg width="14.00" height="14" viewBox="0 0 512 512" ><path fill="currentColor" d="M497.9 142.100l-46.100 46.100c-4.700 4.700-12.300 4.700-17 0l-111-111c-4.700-4.700-4.700-12.300 0-17l46.100-46.100c18.700-18.700 49.100-18.700 67.900 0l60.100 60.100c18.800 18.700 18.800 49.100 0 67.900zM284.200 99.800L21.600 362.400.4 483.900c-2.900 16.400 11.400 30.600 27.800 27.800l121.500-21.300 262.600-262.600c4.700-4.700 4.700-12.300 0-17l-111-111c-4.800-4.700-12.400-4.700-17.100 0zM124.100 339.900c-5.500-5.500-5.500-14.300 0-19.800l154-154c5.500-5.500 14.300-5.500 19.800 0s5.500 14.300 0 19.800l-154 154c-5.500 5.500-14.300 5.500-19.800 0zM88 424h48v36.300l-64.500 11.300-31.100-31.100L51.700 376H88v48z"/></svg><span>Edit</span></a></td></tr>
      <tr><td class="c"><span class="cb"></span></td><td class="c">2</td><td class="d" style="letter-spacing:-0.27px">0056311290</td><td class="d" style="letter-spacing:-0.46px">56311290</td><td class="n" style="letter-spacing:0.47px">Abdul Ghani Nurfajri</td><td class="l">L</td><td class="c"><a class="ed"><svg width="14.00" height="14" viewBox="0 0 512 512" ><path fill="currentColor" d="M497.9 142.100l-46.100 46.100c-4.700 4.700-12.300 4.700-17 0l-111-111c-4.700-4.700-4.700-12.300 0-17l46.100-46.100c18.700-18.700 49.100-18.700 67.900 0l60.100 60.100c18.800 18.700 18.800 49.100 0 67.900zM284.200 99.800L21.600 362.400.4 483.900c-2.900 16.400 11.400 30.600 27.800 27.800l121.500-21.300 262.600-262.600c4.700-4.700 4.700-12.300 0-17l-111-111c-4.800-4.700-12.400-4.700-17.100 0zM124.100 339.900c-5.500-5.500-5.500-14.300 0-19.800l154-154c5.500-5.500 14.300-5.500 19.800 0s5.500 14.300 0 19.800l-154 154c-5.500 5.500-14.300 5.500-19.800 0zM88 424h48v36.300l-64.500 11.300-31.100-31.100L51.700 376H88v48z"/></svg><span>Edit</span></a></td></tr>
      <tr class="o"><td class="c"><span class="cb"></span></td><td class="c">3</td><td class="d" style="letter-spacing:-0.29px">0086354181</td><td class="d" style="letter-spacing:-0.54px">86354181</td><td class="n" style="letter-spacing:0.4px">Adam Raihan Hevi</td><td class="l">L</td><td class="c"><a class="ed"><svg width="14.00" height="14" viewBox="0 0 512 512" ><path fill="currentColor" d="M497.9 142.100l-46.100 46.100c-4.700 4.700-12.300 4.700-17 0l-111-111c-4.700-4.700-4.700-12.300 0-17l46.100-46.100c18.700-18.700 49.100-18.700 67.900 0l60.100 60.100c18.800 18.700 18.800 49.100 0 67.900zM284.200 99.800L21.600 362.400.4 483.900c-2.900 16.400 11.400 30.600 27.800 27.800l121.500-21.300 262.600-262.600c4.700-4.700 4.700-12.300 0-17l-111-111c-4.800-4.700-12.400-4.700-17.100 0zM124.100 339.900c-5.500-5.500-5.500-14.300 0-19.800l154-154c5.500-5.500 14.300-5.500 19.800 0s5.500 14.300 0 19.800l-154 154c-5.500 5.500-14.300 5.500-19.800 0zM88 424h48v36.300l-64.500 11.300-31.100-31.100L51.700 376H88v48z"/></svg><span>Edit</span></a></td></tr>
      <tr><td class="c"><span class="cb"></span></td><td class="c">4</td><td class="d" style="letter-spacing:0.29px">0083601988</td><td class="d" style="letter-spacing:0.18px">83601988</td><td class="n" style="letter-spacing:0.34px">Ade Al Barkah</td><td class="l">L</td><td class="c"><a class="ed"><svg width="14.00" height="14" viewBox="0 0 512 512" ><path fill="currentColor" d="M497.9 142.100l-46.100 46.100c-4.700 4.700-12.300 4.700-17 0l-111-111c-4.700-4.700-4.700-12.300 0-17l46.100-46.100c18.700-18.700 49.100-18.700 67.900 0l60.100 60.100c18.800 18.700 18.800 49.100 0 67.900zM284.200 99.800L21.600 362.400.4 483.900c-2.900 16.400 11.400 30.600 27.800 27.800l121.500-21.300 262.600-262.600c4.700-4.700 4.700-12.300 0-17l-111-111c-4.800-4.700-12.400-4.700-17.100 0zM124.100 339.900c-5.500-5.500-5.500-14.300 0-19.800l154-154c5.500-5.500 14.300-5.500 19.800 0s5.500 14.300 0 19.800l-154 154c-5.500 5.500-14.300 5.500-19.800 0zM88 424h48v36.300l-64.500 11.300-31.100-31.100L51.700 376H88v48z"/></svg><span>Edit</span></a></td></tr>
      <tr class="o"><td class="c"><span class="cb"></span></td><td class="c">5</td><td class="d" style="letter-spacing:-0.3px">20218144</td><td class="d" style="letter-spacing:-0.26px">20218144</td><td class="n" style="letter-spacing:0.3px">Adi Riyanto</td><td class="l">L</td><td class="c"><a class="ed"><svg width="14.00" height="14" viewBox="0 0 512 512" ><path fill="currentColor" d="M497.9 142.100l-46.100 46.100c-4.700 4.700-12.300 4.700-17 0l-111-111c-4.700-4.700-4.700-12.300 0-17l46.100-46.100c18.700-18.700 49.100-18.700 67.900 0l60.100 60.100c18.800 18.700 18.800 49.100 0 67.900zM284.200 99.800L21.600 362.400.4 483.900c-2.900 16.400 11.400 30.600 27.800 27.800l121.500-21.300 262.600-262.600c4.700-4.700 4.700-12.300 0-17l-111-111c-4.800-4.700-12.400-4.700-17.100 0zM124.100 339.900c-5.500-5.500-5.500-14.300 0-19.800l154-154c5.500-5.500 14.300-5.500 19.800 0s5.500 14.300 0 19.800l-154 154c-5.500 5.500-14.300 5.500-19.800 0zM88 424h48v36.300l-64.500 11.300-31.100-31.100L51.700 376H88v48z"/></svg><span>Edit</span></a></td></tr>
      <tr><td class="c"><span class="cb"></span></td><td class="c">6</td><td class="d" style="letter-spacing:0.49px">0069962289</td><td class="d" style="letter-spacing:0.39px">69962289</td><td class="n" style="letter-spacing:0.19px">Adi Rosadi</td><td class="l">L</td><td class="c"><a class="ed"><svg width="14.00" height="14" viewBox="0 0 512 512" ><path fill="currentColor" d="M497.9 142.100l-46.100 46.100c-4.700 4.700-12.300 4.700-17 0l-111-111c-4.700-4.700-4.700-12.300 0-17l46.100-46.100c18.700-18.700 49.100-18.700 67.900 0l60.100 60.100c18.800 18.700 18.800 49.100 0 67.900zM284.200 99.800L21.600 362.400.4 483.900c-2.900 16.400 11.400 30.600 27.800 27.800l121.500-21.300 262.600-262.600c4.700-4.700 4.700-12.300 0-17l-111-111c-4.800-4.700-12.400-4.700-17.100 0zM124.100 339.900c-5.500-5.500-5.500-14.300 0-19.800l154-154c5.500-5.500 14.300-5.500 19.800 0s5.500 14.300 0 19.800l-154 154c-5.500 5.500-14.300 5.500-19.800 0zM88 424h48v36.300l-64.500 11.300-31.100-31.100L51.700 376H88v48z"/></svg><span>Edit</span></a></td></tr>
      <tr class="o"><td class="c"><span class="cb"></span></td><td class="c">7</td><td class="d" style="letter-spacing:-0.21px">0073401051</td><td class="d" style="letter-spacing:-0.52px">73401051</td><td class="n" style="letter-spacing:0.44px">Adinda Nursyamsiah</td><td class="l">P</td><td class="c"><a class="ed"><svg width="14.00" height="14" viewBox="0 0 512 512" ><path fill="currentColor" d="M497.9 142.100l-46.100 46.100c-4.700 4.700-12.300 4.700-17 0l-111-111c-4.700-4.700-4.700-12.300 0-17l46.100-46.100c18.700-18.700 49.100-18.700 67.900 0l60.100 60.100c18.800 18.700 18.800 49.100 0 67.900zM284.200 99.800L21.600 362.400.4 483.900c-2.900 16.400 11.400 30.600 27.800 27.800l121.500-21.300 262.600-262.600c4.700-4.700 4.700-12.300 0-17l-111-111c-4.800-4.700-12.400-4.700-17.100 0zM124.100 339.900c-5.500-5.500-5.500-14.300 0-19.800l154-154c5.500-5.500 14.300-5.500 19.800 0s5.500 14.300 0 19.800l-154 154c-5.500 5.500-14.300 5.500-19.800 0zM88 424h48v36.300l-64.500 11.300-31.100-31.100L51.700 376H88v48z"/></svg><span>Edit</span></a></td></tr>
      <tr><td class="c"><span class="cb"></span></td><td class="c">8</td><td class="d" style="letter-spacing:-0.43px">0071781392</td><td class="d" style="letter-spacing:-0.42px">0071781392</td><td class="n" style="letter-spacing:0.38px">Adisty Nurhapsari</td><td class="l">P</td><td class="c"><a class="ed"><svg width="14.00" height="14" viewBox="0 0 512 512" ><path fill="currentColor" d="M497.9 142.100l-46.100 46.100c-4.700 4.700-12.300 4.700-17 0l-111-111c-4.700-4.700-4.700-12.300 0-17l46.100-46.100c18.700-18.700 49.100-18.700 67.900 0l60.100 60.100c18.800 18.700 18.800 49.100 0 67.900zM284.200 99.800L21.600 362.400.4 483.900c-2.900 16.400 11.400 30.600 27.800 27.800l121.500-21.300 262.600-262.600c4.700-4.700 4.700-12.300 0-17l-111-111c-4.800-4.700-12.400-4.700-17.100 0zM124.100 339.900c-5.500-5.500-5.500-14.300 0-19.800l154-154c5.500-5.500 14.300-5.500 19.800 0s5.500 14.300 0 19.800l-154 154c-5.500 5.500-14.300 5.500-19.800 0zM88 424h48v36.300l-64.500 11.300-31.100-31.100L51.700 376H88v48z"/></svg><span>Edit</span></a></td></tr>
      <tr class="o"><td class="c"><span class="cb"></span></td><td class="c">9</td><td class="d" style="letter-spacing:-0.32px">0073310710</td><td class="d" style="letter-spacing:-0.31px">0073310710</td><td class="n" style="letter-spacing:0.45px">Aditya Bayu Ningrat</td><td class="l">L</td><td class="c"><a class="ed"><svg width="14.00" height="14" viewBox="0 0 512 512" ><path fill="currentColor" d="M497.9 142.100l-46.100 46.100c-4.700 4.700-12.300 4.700-17 0l-111-111c-4.700-4.700-4.700-12.300 0-17l46.100-46.100c18.700-18.700 49.100-18.700 67.900 0l60.100 60.100c18.800 18.700 18.800 49.100 0 67.900zM284.200 99.800L21.600 362.400.4 483.900c-2.900 16.400 11.400 30.600 27.800 27.800l121.500-21.300 262.600-262.600c4.700-4.700 4.700-12.300 0-17l-111-111c-4.800-4.700-12.400-4.700-17.100 0zM124.100 339.900c-5.500-5.500-5.500-14.300 0-19.800l154-154c5.500-5.500 14.300-5.500 19.800 0s5.500 14.300 0 19.800l-154 154c-5.500 5.500-14.300 5.500-19.800 0zM88 424h48v36.300l-64.500 11.300-31.100-31.100L51.700 376H88v48z"/></svg><span>Edit</span></a></td></tr>
      <tr><td class="c"><span class="cb"></span></td><td class="c">10</td><td class="d" style="letter-spacing:0.37px">0063595984</td><td class="d" style="letter-spacing:0.24px">0063595984</td><td class="n" style="letter-spacing:0.35px">Aditya Suryaman</td><td class="l">L</td><td class="c"><a class="ed"><svg width="14.00" height="14" viewBox="0 0 512 512" ><path fill="currentColor" d="M497.9 142.100l-46.100 46.100c-4.700 4.700-12.300 4.700-17 0l-111-111c-4.700-4.700-4.700-12.300 0-17l46.100-46.100c18.700-18.700 49.100-18.700 67.900 0l60.100 60.100c18.800 18.700 18.800 49.100 0 67.900zM284.200 99.800L21.600 362.400.4 483.900c-2.900 16.400 11.400 30.600 27.800 27.800l121.500-21.300 262.600-262.600c4.700-4.700 4.700-12.300 0-17l-111-111c-4.800-4.700-12.400-4.700-17.100 0zM124.100 339.900c-5.500-5.500-5.500-14.300 0-19.800l154-154c5.500-5.500 14.300-5.500 19.800 0s5.500 14.300 0 19.800l-154 154c-5.500 5.500-14.300 5.500-19.800 0zM88 424h48v36.300l-64.500 11.300-31.100-31.100L51.700 376H88v48z"/></svg><span>Edit</span></a></td></tr>
    </tbody>
  </table>
</section>
</body>
</html>
